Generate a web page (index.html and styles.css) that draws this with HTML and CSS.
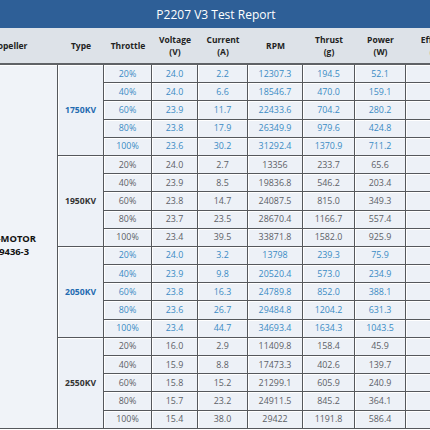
FILE: index.html
```html
<!DOCTYPE html>
<html>
<head>
<meta charset="utf-8">
<link rel="stylesheet" href="styles.css">
</head>
<body>
<div class="page">
  <div class="title">P2207 V3 Test Report</div>
  <table class="report">
    <colgroup>
      <col class="c-prop"><col class="c-type"><col class="c-thr"><col class="c-volt"><col class="c-cur"><col class="c-rpm"><col class="c-thrust"><col class="c-pow"><col class="c-eff">
    </colgroup>
    <thead>
      <tr>
        <th>Propeller</th><th>Type</th><th>Throttle</th><th>Voltage<br>(V)</th><th>Current<br>(A)</th><th>RPM</th><th>Thrust<br>(g)</th><th>Power<br>(W)</th><th>Efficiency<br>(g/W)</th>
      </tr>
    </thead>
    <tbody>
      <tr class="blue"><td class="prop" rowspan="20"><span class="l1">T-MOTOR</span><span class="l2">T9436-3</span></td><td class="kv" rowspan="5">1750KV</td><td>20%</td><td>24.0</td><td>2.2</td><td>12307.3</td><td>194.5</td><td>52.1</td><td>3.73</td></tr>
      <tr class="blue"><td>40%</td><td>24.0</td><td>6.6</td><td>18546.7</td><td>470.0</td><td>159.1</td><td>2.95</td></tr>
      <tr class="blue"><td>60%</td><td>23.9</td><td>11.7</td><td>22433.6</td><td>704.2</td><td>280.2</td><td>2.51</td></tr>
      <tr class="blue"><td>80%</td><td>23.8</td><td>17.9</td><td>26349.9</td><td>979.6</td><td>424.8</td><td>2.31</td></tr>
      <tr class="blue"><td>100%</td><td>23.6</td><td>30.2</td><td>31292.4</td><td>1370.9</td><td>711.2</td><td>1.93</td></tr>

      <tr class="grey"><td class="kv" rowspan="5">1950KV</td><td>20%</td><td>24.0</td><td>2.7</td><td>13356</td><td>233.7</td><td>65.6</td><td>3.56</td></tr>
      <tr class="grey"><td>40%</td><td>23.9</td><td>8.5</td><td>19836.8</td><td>546.2</td><td>203.4</td><td>2.69</td></tr>
      <tr class="grey"><td>60%</td><td>23.8</td><td>14.7</td><td>24087.5</td><td>815.0</td><td>349.3</td><td>2.33</td></tr>
      <tr class="grey"><td>80%</td><td>23.7</td><td>23.5</td><td>28670.4</td><td>1166.7</td><td>557.4</td><td>2.09</td></tr>
      <tr class="grey"><td>100%</td><td>23.4</td><td>39.5</td><td>33871.8</td><td>1582.0</td><td>925.9</td><td>1.71</td></tr>

      <tr class="blue"><td class="kv" rowspan="5">2050KV</td><td>20%</td><td>24.0</td><td>3.2</td><td>13798</td><td>239.3</td><td>75.9</td><td>3.15</td></tr>
      <tr class="blue"><td>40%</td><td>23.9</td><td>9.8</td><td>20520.4</td><td>573.0</td><td>234.9</td><td>2.44</td></tr>
      <tr class="blue"><td>60%</td><td>23.8</td><td>16.3</td><td>24789.8</td><td>852.0</td><td>388.1</td><td>2.20</td></tr>
      <tr class="blue"><td>80%</td><td>23.6</td><td>26.7</td><td>29484.8</td><td>1204.2</td><td>631.3</td><td>1.91</td></tr>
      <tr class="blue"><td>100%</td><td>23.4</td><td>44.7</td><td>34693.4</td><td>1634.3</td><td>1043.5</td><td>1.57</td></tr>

      <tr class="grey"><td class="kv" rowspan="5">2550KV</td><td>20%</td><td>16.0</td><td>2.9</td><td>11409.8</td><td>158.4</td><td>45.9</td><td>3.45</td></tr>
      <tr class="grey"><td>40%</td><td>15.9</td><td>8.8</td><td>17473.3</td><td>402.6</td><td>139.7</td><td>2.88</td></tr>
      <tr class="grey"><td>60%</td><td>15.8</td><td>15.2</td><td>21299.1</td><td>605.9</td><td>240.9</td><td>2.52</td></tr>
      <tr class="grey"><td>80%</td><td>15.7</td><td>23.2</td><td>24911.5</td><td>845.2</td><td>364.1</td><td>2.32</td></tr>
      <tr class="grey"><td>100%</td><td>15.4</td><td>38.0</td><td>29422</td><td>1191.8</td><td>586.4</td><td>2.03</td></tr>
    </tbody>
  </table>
</div>
</body>
</html>
```
FILE: styles.css
```css
html, body {
  margin: 0;
  padding: 0;
  background: #ffffff;
}

.page {
  width: 430px;
  height: 430px;
  overflow: hidden;
  font-family: "Open Sans", "Liberation Sans", sans-serif;
}

.title {
  height: 28px;
  background: #2e5f97;
  color: #ffffff;
  font-size: 12px;
  display: flex;
  align-items: center;
  justify-content: center;
  padding-left: 2px;
}

.report {
  margin-left: -42px;
  border-collapse: separate;
  border-spacing: 0;
  table-layout: fixed;
  width: 518px;
}

.c-prop { width: 100px; }
.c-type { width: 46px; }
.c-thr { width: 48px; }
.c-volt { width: 46px; }
.c-cur { width: 50px; }
.c-rpm { width: 55px; }
.c-thrust { width: 52px; }
.c-pow { width: 51px; }
.c-eff { width: 70px; }

.report th {
  height: 37px;
  padding: 0;
  background: #dde2e8;
  color: #222222;
  font-size: 8.5px;
  font-weight: 700;
  line-height: 12px;
  text-align: center;
  vertical-align: middle;
  border-bottom: 2px solid #5f6266;
  box-sizing: border-box;
}

.report td {
  box-sizing: border-box;
  height: 18.2px;
  padding: 0;
  background: #edf1f7;
  font-size: 8.9px;
  line-height: 10px;
  text-align: center;
  vertical-align: middle;
  border-right: 1px solid #55585c;
  border-bottom: 1px solid #55585c;
  box-shadow: inset 1px 1px 0 #ffffff;
  white-space: nowrap;
}

.blue td { color: #3a8bc4; }
.grey td { color: #5c6066; }

.report td.kv {
  font-weight: 700;
  font-size: 8.6px;
}
.blue td.kv { color: #1f6bb0; }
.grey td.kv { color: #333333; }

.report td.prop {
  background: #f0f3f8;
  color: #111111;
  font-weight: 700;
  font-size: 9.4px;
  line-height: 13px;
  text-align: right;
  padding-right: 21px;
  padding-bottom: 2px;
}

.prop .l1, .prop .l2 {
  display: block;
}

.prop .l2 {
  margin-right: 7px;
}
```
